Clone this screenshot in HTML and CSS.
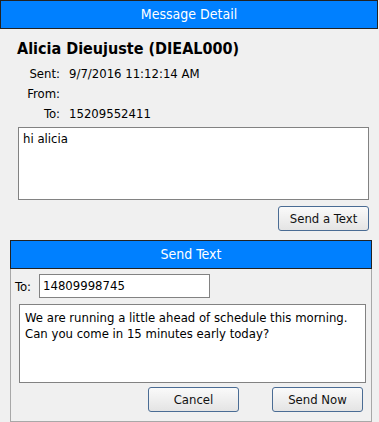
FILE: index.html
```html
<!DOCTYPE html>
<html lang="en">
<head>
    <meta charset="UTF-8">
    <meta name="viewport" content="width=device-width, initial-scale=1.0">
    <title>Message Detail</title>
    <link rel="stylesheet" href="styles.css">
</head>
<body>
    <div class="title-bar">Message Detail</div>

    <div class="detail">
        <h1 class="contact-name">Alicia Dieujuste (DIEAL000)</h1>
        <div class="info">
            <span class="label">Sent:</span><span class="value">9/7/2016 11:12:14 AM</span>
            <span class="label">From:</span><span class="value"></span>
            <span class="label">To:</span><span class="value">15209552411</span>
        </div>
        <div class="message-box">hi alicia</div>
        <div class="button-row">
            <button class="btn btn-text">Send a Text</button>
        </div>
    </div>

    <div class="send-panel">
        <div class="title-bar panel-title">Send Text</div>
        <div class="panel-body">
            <div class="to-row">
                <span class="to-label">To:</span>
                <div class="to-input">14809998745</div>
            </div>
            <div class="compose-box">We are running a little ahead of schedule this morning.<br>Can you come in 15 minutes early today?</div>
            <div class="panel-buttons">
                <button class="btn">Cancel</button>
                <button class="btn">Send Now</button>
            </div>
        </div>
    </div>
</body>
</html>
```

FILE: styles.css
```css
body {
    margin: 0;
    width: 379px;
    background-color: #f0f0f0;
    font-family: "DejaVu Sans Condensed", "DejaVu Sans", sans-serif;
    font-size: 13px;
    color: #000;
}

.title-bar {
    width: 376px;
    height: 27px;
    line-height: 27px;
    background-color: #0080ff;
    border: 1px solid #222;
    color: #fff;
    font-size: 14px;
    text-align: center;
}

.detail {
    padding: 0 10px 0 18px;
}

.contact-name {
    margin: 0;
    padding-top: 10px;
    margin-left: -1px;
    font-size: 16px;
    line-height: 20px;
    font-weight: bold;
}

.info {
    display: grid;
    grid-template-columns: 42px auto;
    column-gap: 9px;
    line-height: 20px;
    margin-top: 5px;
}

.label {
    text-align: right;
}

.message-box {
    width: 341px;
    height: 65px;
    margin-top: 3px;
    padding: 3px 4px;
    background-color: #fff;
    border: 1px solid #828282;
}

.button-row {
    display: flex;
    justify-content: flex-end;
    margin-top: 6px;
}

.btn {
    width: 91px;
    height: 25px;
    padding: 0;
    font-family: inherit;
    font-size: 13px;
    color: #111;
    background: linear-gradient(#fafafa, #e4e4e4);
    border: 1px solid #4a6c94;
    border-radius: 3px;
}

.send-panel {
    width: 362px;
    margin: 9px 0 0 10px;
}

.panel-title {
    width: 360px;
}

.panel-body {
    height: 152px;
    border: 1px solid #a8a8a8;
    border-top: none;
    padding: 0 4px;
}

.to-row {
    display: flex;
    align-items: center;
    gap: 4px;
    padding-top: 5px;
}

.to-label {
    width: 20px;
}

.to-input {
    width: 166px;
    height: 22px;
    line-height: 22px;
    padding-left: 3px;
    background-color: #fff;
    border: 1px solid #828282;
}

.compose-box {
    width: 335px;
    height: 67px;
    margin: 6px 0 0 4px;
    padding: 5px;
    line-height: 16px;
    background-color: #fff;
    border: 1px solid #828282;
}

.panel-buttons {
    display: flex;
    justify-content: flex-end;
    gap: 33px;
    margin-top: 4px;
    padding-right: 4px;
}
```
